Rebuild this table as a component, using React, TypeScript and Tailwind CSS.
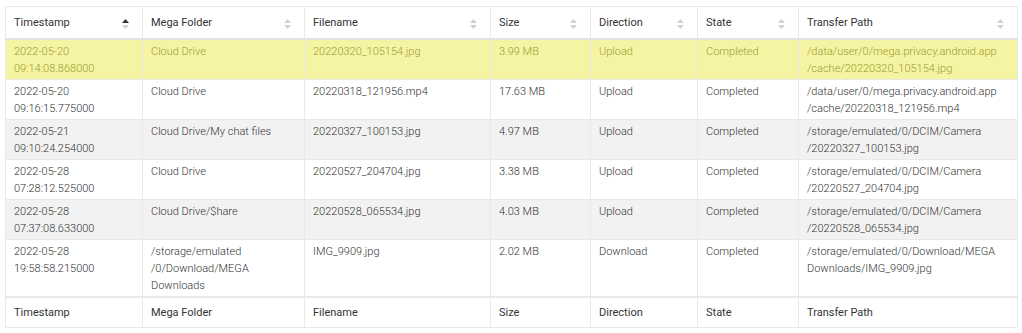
import React from "react";

type Row = {
  ts: [string, string];
  folder: string[];
  file: string;
  size: string;
  dir: string;
  state: string;
  path: string[];
};

const rows: Row[] = [
  {
    ts: ["2022-05-20", "09:14:08.868000"],
    folder: ["Cloud Drive"],
    file: "20220320_105154.jpg",
    size: "3.99 MB",
    dir: "Upload",
    state: "Completed",
    path: ["/data/user/0/mega.privacy.android.app", "/cache/20220320_105154.jpg"],
  },
  {
    ts: ["2022-05-20", "09:16:15.775000"],
    folder: ["Cloud Drive"],
    file: "20220318_121956.mp4",
    size: "17.63 MB",
    dir: "Upload",
    state: "Completed",
    path: ["/data/user/0/mega.privacy.android.app", "/cache/20220318_121956.mp4"],
  },
  {
    ts: ["2022-05-21", "09:10:24.254000"],
    folder: ["Cloud Drive/My chat files"],
    file: "20220327_100153.jpg",
    size: "4.97 MB",
    dir: "Upload",
    state: "Completed",
    path: ["/storage/emulated/0/DCIM/Camera", "/20220327_100153.jpg"],
  },
  {
    ts: ["2022-05-28", "07:28:12.525000"],
    folder: ["Cloud Drive"],
    file: "20220527_204704.jpg",
    size: "3.38 MB",
    dir: "Upload",
    state: "Completed",
    path: ["/storage/emulated/0/DCIM/Camera", "/20220527_204704.jpg"],
  },
  {
    ts: ["2022-05-28", "07:37:08.633000"],
    folder: ["Cloud Drive/$hare"],
    file: "20220528_065534.jpg",
    size: "4.03 MB",
    dir: "Upload",
    state: "Completed",
    path: ["/storage/emulated/0/DCIM/Camera", "/20220528_065534.jpg"],
  },
  {
    ts: ["2022-05-28", "19:58:58.215000"],
    folder: ["/storage/emulated", "/0/Download/MEGA", "Downloads"],
    file: "IMG_9909.jpg",
    size: "2.02 MB",
    dir: "Download",
    state: "Completed",
    path: ["/storage/emulated/0/Download/MEGA", "Downloads/IMG_9909.jpg"],
  },
];

const columns = [
  { label: "Timestamp", width: "w-[137px]" },
  { label: "Mega Folder", width: "w-[162px]" },
  { label: "Filename", width: "w-[186px]" },
  { label: "Size", width: "w-[100px]" },
  { label: "Direction", width: "w-[107px]" },
  { label: "State", width: "w-[101px]" },
  { label: "Transfer Path", width: "w-[219px]" },
];

// Two stacked triangles; the active column gets a dark "up" arrow.
const SortIcon = ({ active }: { active?: boolean }) => (
  <svg width="7" height="10" viewBox="0 0 7 10" className="absolute right-[13px] top-[12px]">
    <path d="M3.5 0 L7 4 L0 4 Z" fill={active ? "#333333" : "#d0d0d0"} />
    <path d="M0 6 L7 6 L3.5 10 Z" fill="#d0d0d0" />
  </svg>
);

const Lines = ({ items }: { items: string[] }) => (
  <>
    {items.map((t, i) => (
      <div key={i}>{t}</div>
    ))}
  </>
);

export default function App() {
  return (
    <div className="min-h-screen bg-white px-[5px] pt-[6px] font-['Roboto',sans-serif] text-[11px] font-light leading-[17px] text-[#333]">
      <table className="w-[1012px] table-fixed border-collapse border border-[#e9e9e9]">
        <colgroup>
          {columns.map((c) => (
            <col key={c.label} className={c.width} />
          ))}
        </colgroup>
        <thead>
          <tr className="h-[32px]">
            {columns.map((c, i) => (
              <th
                key={c.label}
                className="relative border-b-2 border-l border-b-[#e2e2e2] border-l-[#e9e9e9] px-[8px] text-left align-middle font-normal text-[#333]"
              >
                {c.label}
                <SortIcon active={i === 0} />
              </th>
            ))}
          </tr>
        </thead>
        <tbody>
          {rows.map((r, idx) => {
            const highlight = idx === 0;
            const striped = idx === 2 || idx === 4;
            const rowCls = highlight
              ? "bg-[#f4f4a3] text-[#9c9c30]"
              : striped
              ? "bg-[#f2f2f2]"
              : "bg-white";
            const cell = "border-t border-l border-[#e9e9e9] px-[8px] pt-[3px] pb-[2px] align-top";
            return (
              <tr key={idx} className={rowCls}>
                <td className={cell}>
                  <Lines items={r.ts} />
                </td>
                <td className={cell}>
                  <Lines items={r.folder} />
                </td>
                <td className={cell}>{r.file}</td>
                <td className={cell}>{r.size}</td>
                <td className={cell}>{r.dir}</td>
                <td className={cell}>{r.state}</td>
                <td className={cell}>
                  <Lines items={r.path} />
                </td>
              </tr>
            );
          })}
        </tbody>
        <tfoot>
          <tr className="h-[31px]">
            {columns.map((c) => (
              <th
                key={c.label}
                className="border-t-2 border-l border-t-[#e9e9e9] border-l-[#e9e9e9] px-[8px] text-left align-middle font-normal text-[#333]"
              >
                {c.label}
              </th>
            ))}
          </tr>
        </tfoot>
      </table>
    </div>
  );
}
